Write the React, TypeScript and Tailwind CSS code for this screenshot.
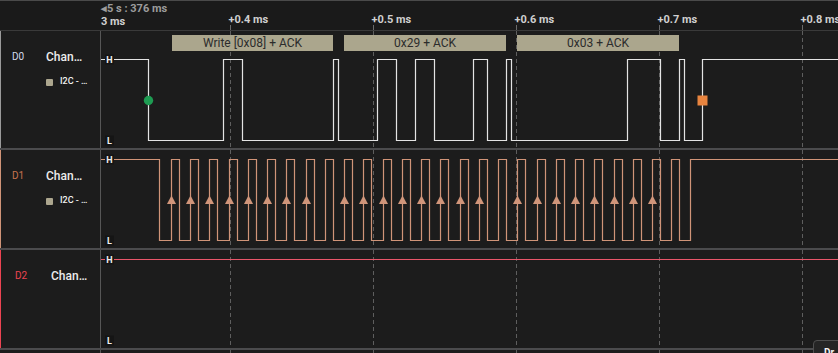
import React from "react";

const OX = 101;
const W = 737;
const TICKS = [230.5, 373.5, 516.5, 659.5, 802.5];
const FONT = { fontFamily: "Roboto, 'Liberation Sans', sans-serif" };

function squarePath(edges: number[], hi: number, lo: number, x0: number, x1: number) {
  let y = hi;
  let d = `M ${x0} ${y}`;
  for (const e of edges) {
    d += ` L ${e} ${y}`;
    y = y === hi ? lo : hi;
    d += ` L ${e} ${y}`;
  }
  d += ` L ${x1} ${y}`;
  return d;
}

const D0_EDGES = [148.5, 223.5, 242.5, 333.5, 338.5, 377.5, 396.5, 415.5, 434.5, 473.5, 487.5, 506.5, 511.5, 627.5, 660.5, 679.5, 684.5, 702.5];

const CLK_R: number[] = [];
for (let k = 0; k < 27; k++) CLK_R.push(Math.round(171.3 + 19.25 * k - 0.5) + 0.5);
const D1_EDGES: number[] = [159.5];
CLK_R.forEach((r) => {
  D1_EDGES.push(r);
  D1_EDGES.push(r + 8);
});
D1_EDGES.push(690.5);

function Ticks({ top, h }: { top: number; h: number }) {
  return (
    <>
      {TICKS.map((x) => (
        <line key={x} x1={x} x2={x} y1={top} y2={top + h} stroke="#5e5e5e" strokeWidth={1} strokeDasharray="4 3" />
      ))}
    </>
  );
}

function HL({ hi, lo }: { hi: number; lo: number }) {
  return (
    <g style={FONT} fontWeight={700} fontSize={9} fill="#f0f0f0">
      <rect x={105} y={hi - 5} width={9} height={10} fill="#151515" />
      <text x={109.5} y={hi + 3.3} textAnchor="middle">H</text>
      <rect x={105} y={lo - 5} width={9} height={10} fill="#151515" />
      <text x={109.5} y={lo + 3.3} textAnchor="middle">L</text>
    </g>
  );
}

function Wave({ top, h, children }: { top: number; h: number; children: React.ReactNode }) {
  return (
    <svg width={W} height={h} className="block shrink-0">
      <g transform={`translate(${-OX} ${-top})`}>
        <Ticks top={top} h={h} />
        {children}
      </g>
    </svg>
  );
}

function Bar({ x1, x2, label }: { x1: number; x2: number; label: string }) {
  return (
    <g>
      <rect x={x1} y={35} width={x2 - x1} height={16} fill="#aba68d" />
      <text x={(x1 + x2) / 2} y={47} textAnchor="middle" fontSize={12} fill="#2c2c2c" style={FONT}>
        {label}
      </text>
    </g>
  );
}

function LeftPanel({
  label,
  labelColor,
  edge,
  i2c,
  shift,
}: {
  label: string;
  labelColor: string;
  edge: string;
  i2c: boolean;
  shift?: boolean;
}) {
  return (
    <div
      className={`w-[101px] shrink-0 border-l border-r border-r-[#565656] flex pt-[18px] ${edge}`}
      style={FONT}
    >
      <div className={`${shift ? "w-[50px] pl-[14px]" : "w-[45px] pl-[11px]"} text-[10px] leading-[16px] ${labelColor}`}>
        {label}
      </div>
      <div className="flex flex-col">
        <div className="text-[12px] leading-[16px] text-[#ececec] font-medium">Chan…</div>
        {i2c && (
          <div className="mt-[11px] flex items-center gap-[7px] h-[12px]">
            <span className="w-[7px] h-[7px] bg-[#aca68e] rounded-[1px]" />
            <span className="text-[9px] font-medium text-[#f2f2f2]">I2C - …</span>
          </div>
        )}
      </div>
    </div>
  );
}

export default function App() {
  return (
    <div className="relative w-[838px] h-[353px] overflow-hidden bg-[#1c1c1c] flex flex-col" style={FONT}>
      {/* Header / time ruler */}
      <div className="h-[31px] shrink-0 flex border-t border-t-[#4a4a4a] border-b border-b-[#3a3a3a] bg-[#1a1a1a]">
        <div className="w-[101px] shrink-0" />
        <div className="relative flex-1">
          <div className="pt-[2px] text-[11px] leading-[12px] font-bold text-[#9c9c9c]">◂5 s : 376 ms</div>
          <div className="pt-[1px] text-[11px] leading-[12px] font-bold text-[#d0d0d0]">3 ms</div>
          {TICKS.map((x, i) => (
            <div
              key={x}
              className="absolute top-[13px] text-[11px] leading-[12px] font-bold text-[#d0d0d0] whitespace-nowrap"
              style={{ left: x - OX - 2 }}
            >
              {["+0.4 ms", "+0.5 ms", "+0.6 ms", "+0.7 ms", "+0.8 ms"][i]}
            </div>
          ))}
          <svg width={W} height={29} className="absolute left-0 top-0 pointer-events-none">
            <g transform={`translate(${-OX} -1)`}>
              {TICKS.map((x) => (
                <line key={x} x1={x} x2={x} y1={25} y2={30} stroke="#6a6a6a" strokeWidth={1} />
              ))}
            </g>
          </svg>
        </div>
      </div>

      {/* D0 */}
      <div className="h-[119px] shrink-0 flex border-b-2 border-b-[#4b4b4d]">
        <LeftPanel label="D0" labelColor="text-[#d3dcec]" edge="border-l-[#9a9a9a]" i2c />
        <Wave top={31} h={117}>
          <Bar x1={172} x2={333} label="Write [0x08] + ACK" />
          <Bar x1={344} x2={506} label="0x29 + ACK" />
          <Bar x1={517} x2={679} label="0x03 + ACK" />
          <path d={squarePath(D0_EDGES, 59.5, 140.5, 101, 838)} fill="none" stroke="#e4e4e4" strokeWidth={1.2} />
          <circle cx={148.5} cy={100.5} r={4.7} fill="#1e9b52" />
          <rect x={697.5} y={95.5} width={10} height={10} fill="#e8843f" />
          <HL hi={59.5} lo={140.5} />
        </Wave>
      </div>

      {/* D1 */}
      <div className="h-[100px] shrink-0 flex border-b-2 border-b-[#4b4b4d]">
        <LeftPanel label="D1" labelColor="text-[#c8734f]" edge="border-l-[#d09478]" i2c />
        <Wave top={150} h={98}>
          <path d={squarePath(D1_EDGES, 159.5, 240.5, 101, 838)} fill="none" stroke="#d09478" strokeWidth={1.2} />
          {CLK_R.map((r, k) =>
            k % 9 === 8 ? null : (
              <polygon key={k} points={`${r},195.5 ${r - 4.5},204 ${r + 4.5},204`} fill="#d0957a" />
            )
          )}
          <HL hi={159.5} lo={240.5} />
        </Wave>
      </div>

      {/* D2 */}
      <div className="h-[100px] shrink-0 flex border-b-2 border-b-[#4b4b4d]">
        <LeftPanel label="D2" labelColor="text-[#ec4452]" edge="border-l-[#ec4452]" i2c={false} shift />
        <Wave top={250} h={98}>
          <line x1={101} x2={838} y1={259.5} y2={259.5} stroke="#e8566a" strokeWidth={1.2} />
          <HL hi={259.5} lo={340.5} />
        </Wave>
      </div>

      {/* remainder */}
      <div className="flex-1 flex">
        <div className="w-[101px] shrink-0 border-r border-r-[#565656]" />
        <Wave top={350} h={3}>
          <g />
        </Wave>
      </div>

      {/* tooltip fragment bottom-right */}
      <div className="absolute left-[813px] top-[340px] w-[40px] h-[24px] bg-[#252525] border border-[#4e4e4e] rounded-tl-[4px] pl-[10px] pt-[6px] text-[10px] leading-[12px] font-bold text-[#f4f4f4]">
        Dr
      </div>
    </div>
  );
}
